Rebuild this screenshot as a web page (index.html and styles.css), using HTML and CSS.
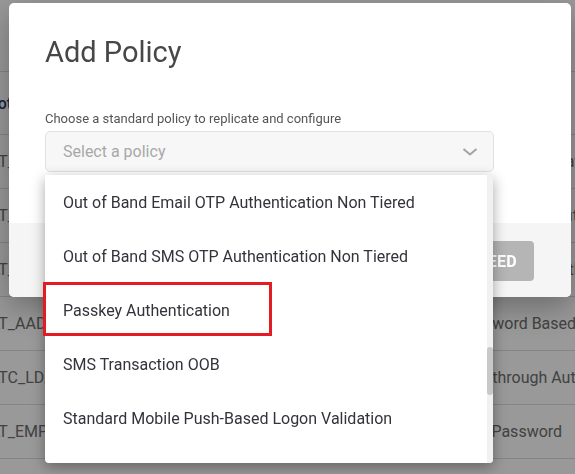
FILE: index.html
```html
<!DOCTYPE html>
<html lang="en">
<head>
<meta charset="utf-8">
<title>Add Policy</title>
<link rel="stylesheet" href="styles.css">
</head>
<body>
  <div class="page">
    <div class="topbar"></div>
    <div class="table">
      <div class="row head"><span class="c1">Protocol</span><span class="c2">Type</span></div>
      <div class="row"><span class="c1">DEFAULT_KRB</span><span class="c2">Kerberos Integrated</span></div>
      <div class="row"><span class="c1">DEFAULT_SSO</span><span class="c2">Desktop SSO Authentication</span></div>
      <div class="row"><span class="c1">DEFAULT_PSH</span><span class="c2">Mobile Push Auth</span></div>
      <div class="row"><span class="c1">DEFAULT_AADPWD</span><span class="c2">Password Based</span></div>
      <div class="row"><span class="c1">DEFAULTC_LDAP</span><span class="c2">Passthrough Authentication</span></div>
      <div class="row"><span class="c1">DEFAULT_EMPWD</span><span class="c2">OTP Password</span></div>
    </div>
  </div>

  <div class="backdrop"></div>

  <div class="modal">
    <div class="modal-body">
      <h1 class="title">Add Policy</h1>
      <label class="label">Choose a standard policy to replicate and configure</label>
      <div class="field">
        <div class="select">
          <span class="placeholder">Select a policy</span>
          <svg class="chevron" width="16" height="10" viewBox="0 0 16 10"><path d="M1.5 2 L8 7.5 L14.5 2" fill="none" stroke="#a3a3a3" stroke-width="2"/></svg>
        </div>
        <div class="menu">
          <div class="item">Out of Band Email OTP Authentication Non Tiered</div>
          <div class="item">Out of Band SMS OTP Authentication Non Tiered</div>
          <div class="item">Passkey Authentication</div>
          <div class="item">SMS Transaction OOB</div>
          <div class="item">Standard Mobile Push-Based Logon Validation</div>
          <div class="track"><div class="thumb"></div></div>
        </div>
      </div>
    </div>
    <div class="modal-footer">
      <button class="btn">PROCEED</button>
    </div>
  </div>

  <div class="highlight"></div>
</body>
</html>
```

FILE: styles.css
```css
* { box-sizing: border-box; }
html, body { margin: 0; padding: 0; }
body {
  width: 575px;
  height: 474px;
  overflow: hidden;
  position: relative;
  background: #fff;
  font-family: Roboto, "Liberation Sans", Arial, sans-serif;
}

/* background page */
.page { width: 575px; height: 474px; overflow: hidden; }
.topbar { height: 72px; border-bottom: 1px solid #dcdcdc; }
.row {
  display: grid;
  grid-template-columns: 513px 118px;
  margin-left: -56px;
  height: 54px;
  border-bottom: 1px solid #dcdcdc;
  align-items: center;
  font-size: 16px;
  color: #6e6e6e;
  white-space: nowrap;
}
.row span { overflow: hidden; }
.row.head { height: 63px; color: #2b3a72; font-weight: 500; }
.row.head .c1 { padding-left: 38px; }

.backdrop {
  position: fixed;
  inset: 0;
  background: rgba(0, 0, 0, 0.4);
}

/* modal */
.modal {
  position: absolute;
  left: 9px;
  top: 3px;
  width: 562px;
  height: 294px;
  background: #fff;
  border-radius: 5px;
  box-shadow: 0 10px 30px rgba(0, 0, 0, 0.3);
  display: flex;
  flex-direction: column;
}
.modal-body {
  height: 220px;
  padding: 32px 36px 0 36px;
}
.title {
  margin: 0;
  font-size: 29px;
  font-weight: 400;
  color: #474747;
  line-height: 34px;
}
.label {
  display: block;
  margin-top: 42px;
  font-size: 13px;
  color: #555;
  line-height: 15px;
}
.field { position: relative; margin-top: 5px; width: 449px; }
.select {
  height: 41px;
  border: 1px solid #e0e0e0;
  border-radius: 5px;
  background: #f7f7f7;
  display: flex;
  align-items: center;
  justify-content: space-between;
  padding: 0 15px 0 17px;
}
.placeholder { font-size: 16px; color: #a8a8a8; }
.chevron { display: block; }

.menu {
  position: absolute;
  top: 44px;
  left: 0;
  width: 448px;
  height: 288px;
  background: #fff;
  border-radius: 0 0 4px 4px;
  box-shadow: 0 4px 14px rgba(0, 0, 0, 0.35);
  overflow: hidden;
  z-index: 2;
}
.item {
  height: 54px;
  display: flex;
  align-items: center;
  padding-left: 18px;
  font-size: 16px;
  color: #33333b;
  white-space: nowrap;
}
.track {
  position: absolute;
  right: 0;
  top: 0;
  bottom: 0;
  width: 6px;
  background: #f1f1f1;
}
.thumb {
  margin-top: 172px;
  height: 48px;
  background: #c8c8c8;
  border-radius: 3px;
}

.modal-footer {
  flex: 1;
  background: #f5f5f5;
  border-radius: 0 0 5px 5px;
  display: flex;
  justify-content: flex-end;
  align-items: flex-start;
  padding: 18px 37px 0 0;
}
.btn {
  height: 40px;
  padding: 0 17px;
  border: none;
  border-radius: 4px;
  background: #b5b5b5;
  color: #fff;
  font-family: Roboto, "Liberation Sans", Arial, sans-serif;
  font-size: 16px;
  font-weight: 700;
  letter-spacing: 0.3px;
}

.highlight {
  position: absolute;
  left: 43px;
  top: 282px;
  width: 229px;
  height: 54px;
  border: 3px solid #e31b23;
  z-index: 5;
}
```
